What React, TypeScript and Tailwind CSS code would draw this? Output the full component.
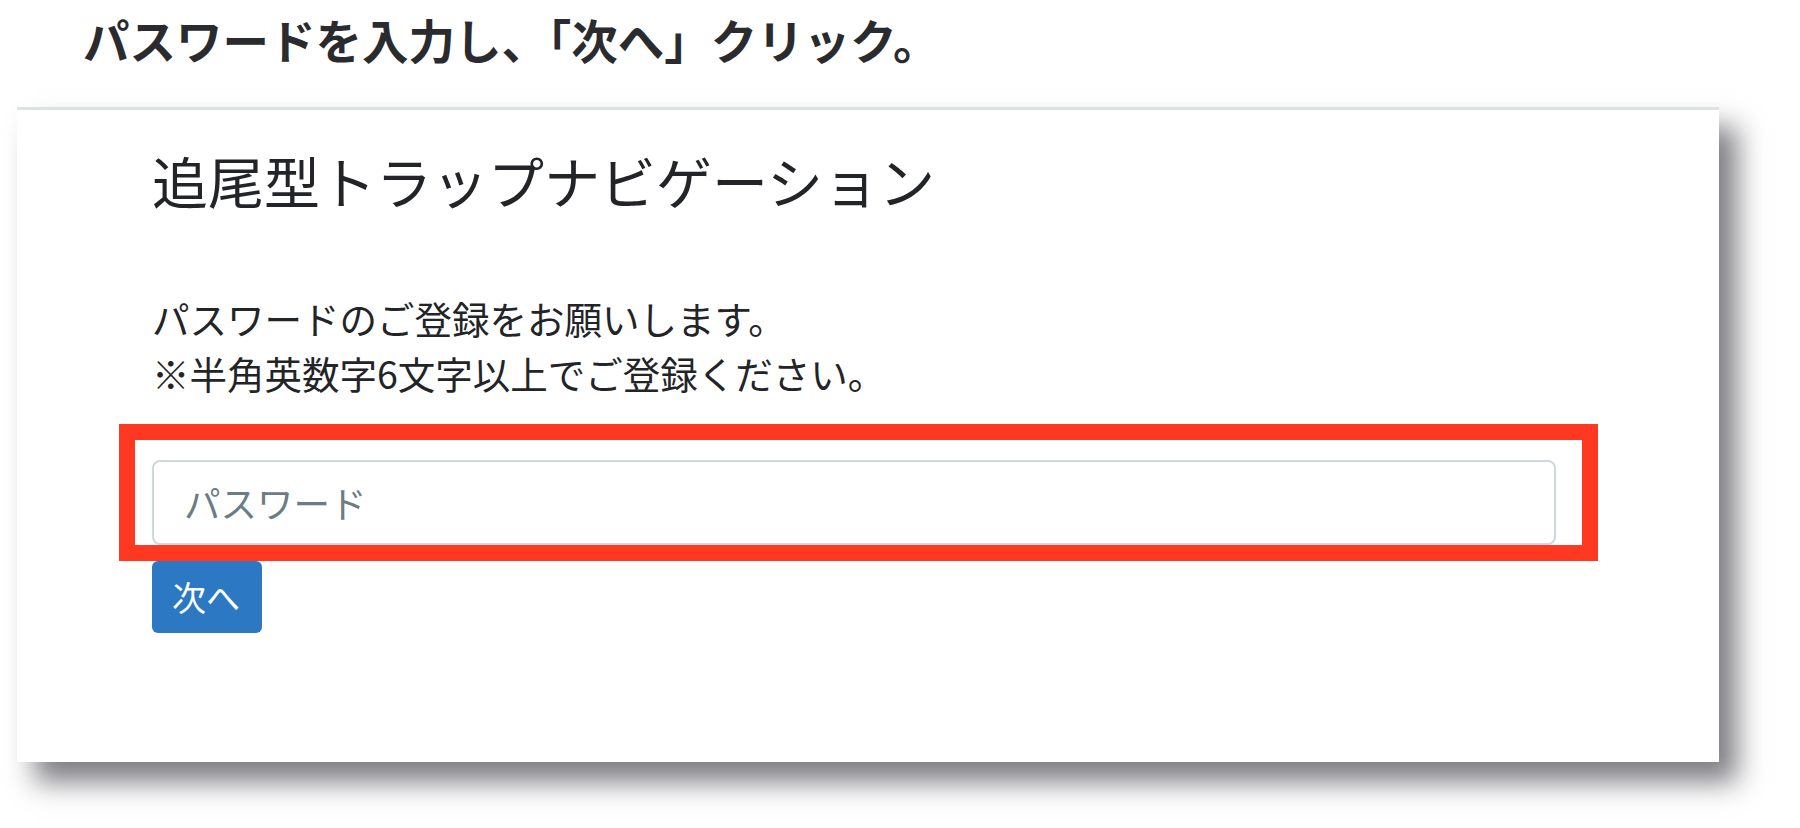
import React from "react";

const jp = "font-['Noto_Sans_CJK_JP','Noto_Sans',sans-serif]";

const App: React.FC = () => {
  return (
    <div className={`min-h-[828px] w-[1800px] bg-white ${jp}`}>
      {/* caption above the screenshot */}
      <div className="pl-[83px] pt-[6px]">
        <p className="text-[46.5px] font-bold leading-[66px] text-[#2a2b2f]">
          パスワードを入力し、「次へ」クリック。
        </p>
      </div>

      {/* screenshot card */}
      <div className="ml-[17px] mt-[35px] h-[655px] w-[1702px] border-t-[3px] border-[#dde3e3] bg-white pl-[135px] pt-[34px] shadow-[18px_20px_26px_rgba(20,20,30,0.55)]">
        <h2 className="text-[56px] font-normal leading-[72px] text-[#222428]">
          追尾型トラップナビゲーション
        </h2>

        <div className="mt-[74px] text-[37.5px] leading-[55px] text-[#222428]">
          <p>パスワードのご登録をお願いします。</p>
          <p>※半角英数字6文字以上でご登録ください。</p>
        </div>

        <div className="relative mt-[60px] w-[1404px]">
          <input
            type="password"
            placeholder="パスワード"
            className="block h-[85px] w-full rounded-[8px] border-2 border-[#cfd8dc] bg-white pl-[30px] text-[36.5px] text-[#222428] outline-none placeholder:text-[#6b7c85]"
          />
          {/* red highlight annotation */}
          <div className="pointer-events-none absolute -left-[33px] -right-[42px] -top-[36px] -bottom-[16px] border-[16px] border-[#ff3822]" />
        </div>

        <button className="mt-[16px] flex h-[72px] items-center rounded-[6px] bg-[#2c78c3] pl-[20px] pr-[22px] text-[34px] leading-none text-white">
          次へ
        </button>
      </div>
    </div>
  );
};

export default App;
